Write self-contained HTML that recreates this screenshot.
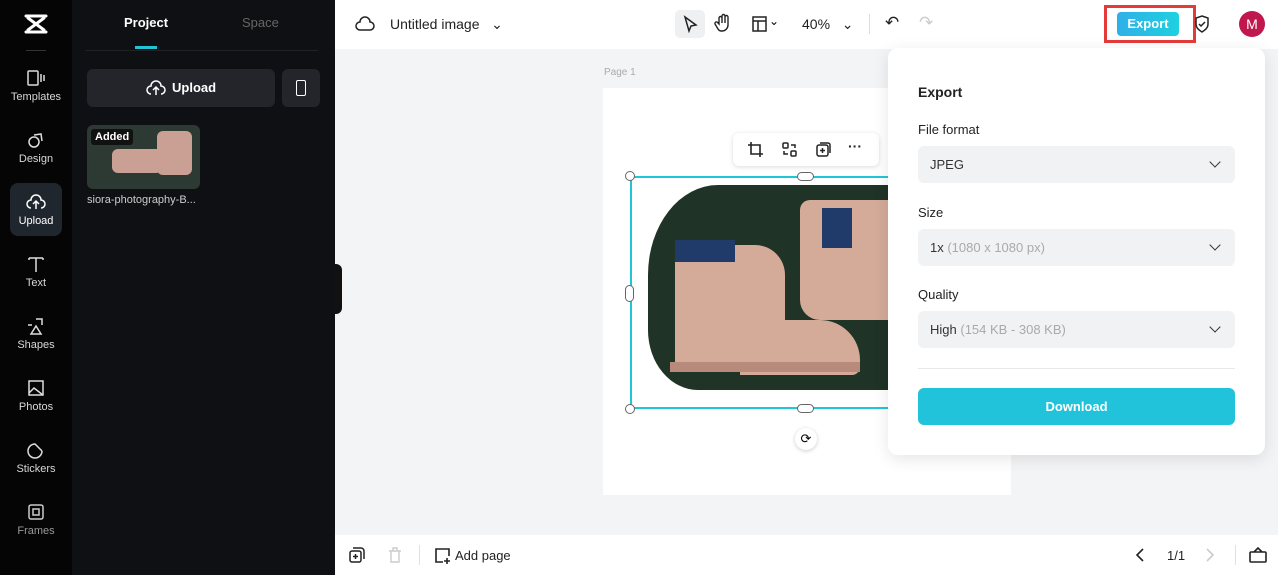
<!DOCTYPE html>
<html><head><meta charset="utf-8"><style>
*{box-sizing:border-box;margin:0;padding:0}
body{width:1278px;height:575px;overflow:hidden;font-family:"Liberation Sans",sans-serif;background:#f3f4f5;position:relative}
.abs{position:absolute}
.rail{left:0;top:0;width:72px;height:575px;background:#050505}
.panel{left:72px;top:0;width:263px;height:575px;background:#0f1013}
.ri{position:absolute;left:0;width:72px;text-align:center;color:#d8d8d8;font-size:11px}
.ri svg{display:block;margin:0 auto 4px}
.top{left:335px;top:0;width:943px;height:49px;background:#fff}
.bot{left:335px;top:535px;width:943px;height:40px;background:#fff}
.pop{left:888px;top:48px;width:377px;height:407px;background:#fff;border-radius:10px;box-shadow:0 4px 16px rgba(0,0,0,.1)}
.lbl{position:absolute;left:30px;font-size:13px;color:#222}
.sel{position:absolute;left:30px;width:317px;height:37px;background:#f1f2f3;border-radius:6px;font-size:13px;color:#333;padding:11px 12px}
.sel span{color:#aaa}
.sel i{position:absolute;right:16px;top:12px;width:8px;height:8px;border-right:1.8px solid #333;border-bottom:1.8px solid #333;transform:rotate(45deg)}
.h{position:absolute;width:10px;height:10px;border:1px solid #666;border-radius:50%;background:#fff}
</style></head><body>
<div class="abs rail">
 <svg class="abs" style="left:23px;top:13px" width="26" height="22" viewBox="0 0 26 22"><path d="M3 3h20M3 19h20M5 5l16 12M21 5L5 17" stroke="#fff" stroke-width="3" fill="none" stroke-linecap="round"/></svg>
 <div class="abs" style="left:26px;top:50px;width:20px;height:1px;background:#333"></div>
 <div class="ri" style="top:69px"><svg width="20" height="18"><rect x="2" y="2" width="10" height="14" rx="1" fill="none" stroke="#ddd" stroke-width="1.5"/><path d="M15 5v8M18 6v6" stroke="#ddd" stroke-width="1.5"/></svg>Templates</div>
 <div class="ri" style="top:131px"><svg width="20" height="18"><circle cx="8" cy="11" r="5" fill="none" stroke="#ddd" stroke-width="1.5"/><path d="M8 4l7 -1 1 7" fill="none" stroke="#ddd" stroke-width="1.5"/></svg>Design</div>
 <div class="abs" style="left:10px;top:183px;width:52px;height:53px;background:#20262e;border-radius:8px"></div>
 <div class="ri" style="top:193px;color:#fff"><svg width="20" height="18"><path d="M5 15a4 4 0 0 1 0-8a5 5 0 0 1 10 0a4 4 0 0 1 0 8M10 16V9M7 11l3-3 3 3" fill="none" stroke="#fff" stroke-width="1.5"/></svg>Upload</div>
 <div class="ri" style="top:255px"><svg width="20" height="18"><path d="M3 3h14M10 3v14M3 3v2M17 3v2" fill="none" stroke="#ddd" stroke-width="1.5"/></svg>Text</div>
 <div class="ri" style="top:317px"><svg width="20" height="18"><path d="M10 2h6v6M6 8l-4 0M10 9l-5 8h10z" fill="none" stroke="#ddd" stroke-width="1.5"/></svg>Shapes</div>
 <div class="ri" style="top:379px"><svg width="20" height="18"><rect x="3" y="2" width="14" height="14" fill="none" stroke="#ddd" stroke-width="1.5"/><path d="M3 14l5-5 9 7" fill="none" stroke="#ddd" stroke-width="1.5"/></svg>Photos</div>
 <div class="ri" style="top:441px"><svg width="20" height="18"><path d="M16 10A7 7 0 1 1 9 3l7 7" fill="none" stroke="#ddd" stroke-width="1.5"/></svg>Stickers</div>
 <div class="ri" style="top:503px;color:#999"><svg width="20" height="18"><rect x="3" y="2" width="14" height="14" rx="2" fill="none" stroke="#ccc" stroke-width="1.5"/><rect x="7" y="6" width="6" height="6" fill="none" stroke="#ccc" stroke-width="1.5"/></svg>Frames</div>
</div>
<div class="abs panel">
 <div class="abs" style="left:52px;top:15px;font-size:13px;font-weight:bold;color:#fff">Project</div>
 <div class="abs" style="left:170px;top:15px;font-size:13px;color:#666">Space</div>
 <div class="abs" style="left:63px;top:46px;width:22px;height:3px;background:#20c3d6"></div>
 <div class="abs" style="left:13px;top:50px;width:233px;height:1px;background:#222"></div>
 <div class="abs" style="left:15px;top:69px;width:188px;height:38px;background:#23252a;border-radius:6px;color:#fff;font-weight:bold;font-size:13px;line-height:38px">
  <svg class="abs" style="left:59px;top:10px" width="20" height="18"><path d="M5 15a4 4 0 0 1 0-8a5 5 0 0 1 10 0a4 4 0 0 1 0 8M10 16V9M7 11l3-3 3 3" fill="none" stroke="#fff" stroke-width="1.5"/></svg>
  <span class="abs" style="left:85px;top:0">Upload</span></div>
 <div class="abs" style="left:210px;top:69px;width:38px;height:38px;background:#23252a;border-radius:6px"><div style="margin:11px auto;width:10px;height:16px;border:1.5px solid #fff;border-radius:2px"></div></div>
 <div class="abs" style="left:15px;top:125px;width:113px;height:64px;border-radius:6px;background:#2c3a33;overflow:hidden">
  <div class="abs" style="left:25px;top:24px;width:50px;height:24px;background:#c9a093;border-radius:6px"></div>
  <div class="abs" style="left:70px;top:6px;width:35px;height:44px;background:#c9a093;border-radius:6px"></div>
  <div class="abs" style="left:4px;top:4px;padding:2px 4px;background:#111;color:#fff;font-size:11px;font-weight:bold;border-radius:3px">Added</div>
 </div>
 <div class="abs" style="left:15px;top:194px;font-size:11px;color:#ccc">siora-photography-B...</div>
</div>
<div class="abs" style="left:334px;top:264px;width:8px;height:50px;background:#111;border-radius:0 6px 6px 0"></div>
<div class="abs top">
 <svg class="abs" style="left:20px;top:15px" width="20" height="18"><path d="M5 15a4 4 0 0 1 0-8a5 5 0 0 1 10 0a4 4 0 0 1 0 8z" fill="none" stroke="#222" stroke-width="1.5"/></svg>
 <div class="abs" style="left:55px;top:16px;font-size:14px;color:#222">Untitled image&nbsp;&nbsp; ⌄</div>
 <div class="abs" style="left:340px;top:10px;width:30px;height:28px;background:#eef0f2;border-radius:5px"></div>
 <svg class="abs" style="left:346px;top:15px" width="18" height="18"><path d="M4 2l11 8-5 1-2 5z" fill="none" stroke="#222" stroke-width="1.5"/></svg>
 <svg class="abs" style="left:379px;top:13px" width="18" height="20"><path d="M5 11V5a1.5 1.5 0 0 1 3 0v5V3a1.5 1.5 0 0 1 3 0v7V4a1.5 1.5 0 0 1 3 0v8a6 6 0 0 1-6 6h-1a4 4 0 0 1-3-2l-3-5a1.5 1.5 0 0 1 3-1z" fill="none" stroke="#222" stroke-width="1.4"/></svg>
 <svg class="abs" style="left:416px;top:15px" width="18" height="18"><rect x="2" y="2" width="13" height="14" fill="none" stroke="#222" stroke-width="1.5"/><path d="M2 6h13M7 6v10" stroke="#222" stroke-width="1.5"/></svg>
 <div class="abs" style="left:434px;top:14px;font-size:12px">⌄</div>
 <div class="abs" style="left:467px;top:16px;font-size:14px;color:#222">40%&nbsp;&nbsp;&nbsp;⌄</div>
 <div class="abs" style="left:534px;top:14px;width:1px;height:20px;background:#ddd"></div>
 <div class="abs" style="left:550px;top:13px;font-size:17px;color:#222">↶</div>
 <div class="abs" style="left:584px;top:13px;font-size:17px;color:#ccc">↷</div>
 <div class="abs" style="left:769px;top:5px;width:92px;height:38px;border:3px solid #e53a3a"></div>
 <div class="abs" style="left:782px;top:12px;width:62px;height:24px;background:linear-gradient(90deg,#2fb0e8,#1fd0e0);border-radius:4px;color:#fff;font-size:13px;font-weight:bold;text-align:center;line-height:24px">Export</div>
 <svg class="abs" style="left:858px;top:14px" width="18" height="20"><path d="M9 2l6 2v6c0 4-3 6-6 8-3-2-6-4-6-8V4z M6 10l2 2 4-4" fill="none" stroke="#222" stroke-width="1.5"/></svg>
 <div class="abs" style="left:904px;top:11px;width:26px;height:26px;border-radius:50%;background:#c0174f;color:#fff;font-size:14px;text-align:center;line-height:26px">M</div>
</div>
<div class="abs" style="left:604px;top:67px;font-size:10px;color:#aaa">Page 1</div>
<div class="abs" style="left:603px;top:88px;width:408px;height:407px;background:#fff"></div>
<div class="abs" style="left:648px;top:185px;width:242px;height:205px;background:#1f3327;border-radius:70px 0 0 50px / 90px 0 0 60px"></div>
<div class="abs" style="left:675px;top:245px;width:110px;height:125px;background:#d4aa99;border-radius:10px 30px 8px 8px"></div>
<div class="abs" style="left:675px;top:240px;width:60px;height:22px;background:#203a6a"></div>
<div class="abs" style="left:740px;top:320px;width:120px;height:55px;background:#d4aa99;border-radius:0 40px 8px 0"></div>
<div class="abs" style="left:670px;top:362px;width:190px;height:10px;background:#b88a7c"></div>
<div class="abs" style="left:800px;top:200px;width:90px;height:120px;background:#d4aa99;border-radius:10px 0 0 20px"></div>
<div class="abs" style="left:822px;top:208px;width:30px;height:40px;background:#203a6a"></div>
<div class="abs" style="left:630px;top:176px;width:260px;height:233px;border:2px solid #1fc6d8;border-right:none"></div>
<div class="h" style="left:625px;top:171px"></div><div class="h" style="left:625px;top:404px"></div>
<div class="abs" style="left:625px;top:285px;width:9px;height:17px;border:1px solid #666;border-radius:5px;background:#fff"></div>
<div class="abs" style="left:797px;top:172px;width:17px;height:9px;border:1px solid #666;border-radius:5px;background:#fff"></div>
<div class="abs" style="left:797px;top:404px;width:17px;height:9px;border:1px solid #666;border-radius:5px;background:#fff"></div>
<div class="abs" style="left:795px;top:428px;width:22px;height:22px;border-radius:50%;background:#fff;box-shadow:0 1px 4px rgba(0,0,0,.2);font-size:13px;text-align:center;line-height:22px">⟳</div>
<div class="abs" style="left:733px;top:133px;width:146px;height:33px;background:#fff;border-radius:6px;box-shadow:0 1px 5px rgba(0,0,0,.15);font-size:14px;color:#222">
 <svg class="abs" style="left:14px;top:8px" width="17" height="17"><path d="M4 1v12h12M1 4h12v12" fill="none" stroke="#222" stroke-width="1.6"/></svg>
 <svg class="abs" style="left:48px;top:8px" width="17" height="17"><rect x="2" y="2" width="5" height="5" rx="1" fill="none" stroke="#222" stroke-width="1.5"/><rect x="10" y="10" width="5" height="5" rx="1" fill="none" stroke="#222" stroke-width="1.5"/><path d="M10 4h4v3M7 13H3v-3" fill="none" stroke="#222" stroke-width="1.5"/></svg>
 <svg class="abs" style="left:82px;top:8px" width="17" height="17"><rect x="2" y="4" width="11" height="11" rx="2" fill="none" stroke="#222" stroke-width="1.5"/><path d="M5 2h8a2 2 0 0 1 2 2v8M7.5 7v5M5 9.5h5" fill="none" stroke="#222" stroke-width="1.5"/></svg>
 <span class="abs" style="left:115px;top:5px;font-weight:bold">···</span>
</div>
<div class="abs pop">
 <div class="lbl" style="top:36px;font-size:14px;font-weight:bold">Export</div>
 <div class="lbl" style="top:74px">File format</div>
 <div class="sel" style="top:98px">JPEG<i></i></div>
 <div class="lbl" style="top:157px">Size</div>
 <div class="sel" style="top:181px">1x <span>(1080 x 1080 px)</span><i></i></div>
 <div class="lbl" style="top:239px">Quality</div>
 <div class="sel" style="top:263px">High <span>(154 KB - 308 KB)</span><i></i></div>
 <div class="abs" style="left:30px;top:320px;width:317px;height:1px;background:#e8e8e8"></div>
 <div class="abs" style="left:30px;top:340px;width:317px;height:37px;background:#20c3d9;border-radius:6px;color:#fff;font-size:13px;font-weight:bold;text-align:center;line-height:37px">Download</div>
</div>
<div class="abs bot">
 <svg class="abs" style="left:14px;top:12px" width="16" height="16"><rect x="1" y="4" width="11" height="11" rx="2" fill="none" stroke="#222" stroke-width="1.5"/><path d="M4 1h8a3 3 0 0 1 3 3v8M6.5 7v5M4 9.5h5" fill="none" stroke="#222" stroke-width="1.5"/></svg>
 <svg class="abs" style="left:53px;top:12px" width="14" height="16"><path d="M1 4h12M3 4v11h8V4M5 4V1h4v3" fill="none" stroke="#ccc" stroke-width="1.4"/></svg>
 <div class="abs" style="left:84px;top:10px;width:1px;height:20px;background:#e0e0e0"></div>
 <svg class="abs" style="left:99px;top:12px" width="18" height="18"><path d="M9 15H2V2h13v7M13 11v6M10 14h6" fill="none" stroke="#222" stroke-width="1.6"/></svg>
 <div class="abs" style="left:120px;top:13px;font-size:13px;color:#222">Add page</div>
 <svg class="abs" style="left:800px;top:13px" width="10" height="14"><path d="M8 1L2 7l6 6" fill="none" stroke="#222" stroke-width="1.6"/></svg>
 <div class="abs" style="left:832px;top:13px;font-size:13px;color:#222">1/1</div>
 <svg class="abs" style="left:870px;top:13px" width="10" height="14"><path d="M2 1l6 6-6 6" fill="none" stroke="#ccc" stroke-width="1.6"/></svg>
 <div class="abs" style="left:900px;top:10px;width:1px;height:20px;background:#e0e0e0"></div>
 <svg class="abs" style="left:913px;top:10px" width="20" height="18"><rect x="2" y="7" width="16" height="10" rx="1" fill="none" stroke="#222" stroke-width="1.6"/><path d="M6 7l4-4 4 4" fill="none" stroke="#222" stroke-width="1.6"/></svg>
</div>
</body></html>
